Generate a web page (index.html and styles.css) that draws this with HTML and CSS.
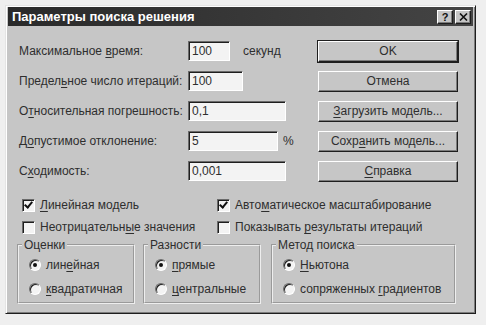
FILE: index.html
```html
<!DOCTYPE html>
<html lang="ru">
<head>
    <meta charset="UTF-8">
    <meta name="viewport" content="width=device-width, initial-scale=1.0">
    <title>Параметры поиска решения</title>
    <link rel="stylesheet" href="styles.css">
</head>
<body>
    <div class="window">
        <div class="titlebar">
            <span class="title">Параметры поиска решения</span>
            <div class="tb-buttons">
                <span class="tb-btn help">?</span>
                <span class="tb-btn">
                    <svg width="9" height="8" viewBox="0 0 9 8"><path d="M1 0.5 L8 7.5 M8 0.5 L1 7.5" stroke="#111" stroke-width="1.6"/></svg>
                </span>
            </div>
        </div>

        <div class="content">
            <div class="row">
                <span class="field-label">Максимальное <u>в</u>ремя:</span>
                <span class="input w-time">100</span>
                <span class="unit">секунд</span>
                <span class="btn default">OK</span>
            </div>
            <div class="row">
                <span class="field-label">Предел<u>ь</u>ное число итераций:</span>
                <span class="input w-iter">100</span>
                <span class="btn">Отмена</span>
            </div>
            <div class="row">
                <span class="field-label">О<u>т</u>носительная погрешность:</span>
                <span class="input w-wide">0,1</span>
                <span class="btn"><u>З</u>агрузить модель...</span>
            </div>
            <div class="row">
                <span class="field-label">Д<u>о</u>пустимое отклонение:</span>
                <span class="input w-tol">5</span>
                <span class="unit pct">%</span>
                <span class="btn">Сохр<u>а</u>нить модель...</span>
            </div>
            <div class="row">
                <span class="field-label">С<u>х</u>одимость:</span>
                <span class="input w-wide">0,001</span>
                <span class="btn"><u>С</u>правка</span>
            </div>

            <div class="checks">
                <div class="check"><span class="box checked"></span><span><u>Л</u>инейная модель</span></div>
                <div class="check"><span class="box checked"></span><span>Авто<u>м</u>атическое масштабирование</span></div>
                <div class="check"><span class="box"></span><span>Неотрицательн<u>ы</u>е значения</span></div>
                <div class="check"><span class="box"></span><span>Показывать <u>р</u>езультаты итераций</span></div>
            </div>

            <div class="groups">
                <fieldset class="group g-est">
                    <legend>Оценки</legend>
                    <div class="radio"><span class="dot on"></span><span>лин<u>е</u>йная</span></div>
                    <div class="radio"><span class="dot"></span><span><u>к</u>вадратичная</span></div>
                </fieldset>
                <fieldset class="group g-diff">
                    <legend>Разности</legend>
                    <div class="radio"><span class="dot on"></span><span><u>п</u>рямые</span></div>
                    <div class="radio"><span class="dot"></span><span><u>ц</u>ентральные</span></div>
                </fieldset>
                <fieldset class="group g-method">
                    <legend>Метод поиска</legend>
                    <div class="radio"><span class="dot on"></span><span><u>Н</u>ьютона</span></div>
                    <div class="radio"><span class="dot"></span><span>сопряженных <u>г</u>радиентов</span></div>
                </fieldset>
            </div>
        </div>
    </div>
</body>
</html>
```

FILE: styles.css
```css
body {
    margin: 0;
    background: #efefef;
    font-family: 'Liberation Sans', Arial, sans-serif;
    font-size: 12px;
    color: #2e2e2e;
}
u {
    text-decoration-thickness: 1px;
    text-underline-offset: 2px;
}
.window {
    box-sizing: border-box;
    width: 471px;
    height: 309px;
    margin: 5px 0 0 5px;
    padding: 2px 2px 2px 2px;
    background: #c6c6c6;
    border: 1px solid;
    border-color: #e4e4e4 #1e1e1e #1e1e1e #e4e4e4;
    box-shadow: inset 1px 1px #fff, inset -1px -1px #7c7c7c;
}
.titlebar {
    display: flex;
    align-items: center;
    height: 19px;
    margin-top: -1px;
    padding: 0 2px 0 4px;
    background: linear-gradient(90deg, #2a2a2a, #444);
}
.title {
    color: #fff;
    font-weight: bold;
    font-size: 13px;
}
.tb-buttons {
    display: flex;
    gap: 2px;
    margin-left: auto;
}
.tb-btn {
    box-sizing: border-box;
    display: flex;
    align-items: center;
    justify-content: center;
    width: 16px;
    height: 14px;
    background: #c6c6c6;
    border: 1px solid;
    border-color: #fff #1e1e1e #1e1e1e #fff;
    box-shadow: inset -1px -1px #7c7c7c;
    font-weight: bold;
    font-size: 11px;
    color: #111;
}
.content {
    padding: 10px 15px 0 11px;
}
.row {
    display: flex;
    align-items: center;
    height: 30px;
}
.field-label {
    width: 169px;
}
.input {
    box-sizing: border-box;
    height: 20px;
    line-height: 18px;
    padding-left: 3px;
    background: #f3f3f3;
    border: 1px solid;
    border-color: #6a6a6a #fff #fff #6a6a6a;
    box-shadow: inset 1px 1px #1e1e1e;
}
.w-time { width: 42px; }
.w-iter { width: 55px; }
.w-wide { width: 98px; }
.w-tol { width: 90px; }
.unit {
    margin-left: 13px;
}
.unit.pct {
    margin-left: 5px;
}
.btn {
    box-sizing: border-box;
    display: flex;
    align-items: center;
    justify-content: center;
    width: 140px;
    height: 21px;
    margin-left: auto;
    background: #c6c6c6;
    border: 1px solid;
    border-color: #fff #1e1e1e #1e1e1e #fff;
    box-shadow: inset -1px -1px #7c7c7c;
}
.btn.default {
    outline: 1px solid #1e1e1e;
}
.checks {
    display: grid;
    grid-template-columns: 195px 1fr;
    margin-top: 8px;
    padding-left: 3px;
}
.check {
    display: flex;
    align-items: center;
    gap: 5px;
    height: 22px;
}
.box {
    box-sizing: border-box;
    position: relative;
    width: 13px;
    height: 13px;
    background: #f3f3f3;
    border: 1px solid;
    border-color: #6a6a6a #fff #fff #6a6a6a;
    box-shadow: inset 1px 1px #1e1e1e;
}
.box.checked::after {
    content: '';
    position: absolute;
    left: 3px;
    top: 0px;
    width: 3px;
    height: 6px;
    border: solid #111;
    border-width: 0 2px 2px 0;
    transform: rotate(40deg);
}
.groups {
    display: flex;
    margin-left: -2px;
}
.group {
    box-sizing: border-box;
    height: 66px;
    margin: 0 8px 0 0;
    padding: 1px 8px 0 3px;
    border: 2px groove #eeeeee;
}
.group legend {
    padding: 0 2px;
}
.g-est { width: 118px; }
.g-diff { width: 118px; margin-right: 10px; }
.g-method { width: 185px; margin-right: 0; }
.radio {
    display: flex;
    align-items: center;
    gap: 5px;
    height: 24px;
    padding-left: 7px;
}
.dot {
    box-sizing: border-box;
    position: relative;
    width: 12px;
    height: 12px;
    border-radius: 50%;
    background: #f3f3f3;
    border: 1px solid;
    border-color: #6a6a6a #fff #fff #6a6a6a;
    box-shadow: inset 1px 1px #1e1e1e;
}
.dot.on::after {
    content: '';
    position: absolute;
    left: 3px;
    top: 3px;
    width: 4px;
    height: 4px;
    border-radius: 50%;
    background: #111;
}
```
